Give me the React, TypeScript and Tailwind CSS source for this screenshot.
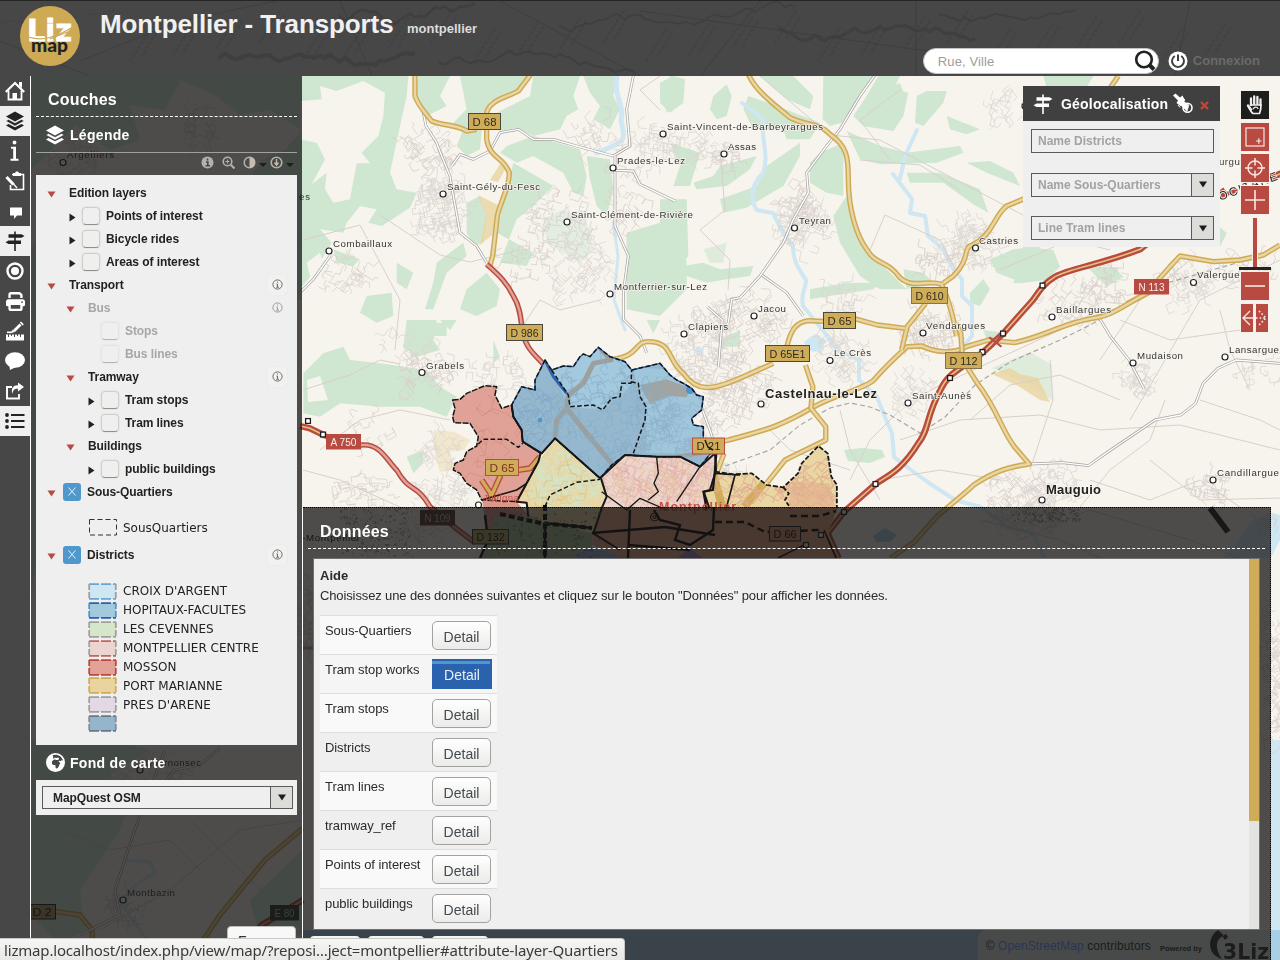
import React from "react";
import { FaPrint, FaEarthAfrica } from "react-icons/fa6";

/* ---------- map drawing ---------- */

type Kind = "local" | "main" | "motorway" | "national";

const casing: Record<Kind, [string, number, string, number]> = {
  local: ["#a5a3a0", 2.8, "#ffffff", 1.4],
  main: ["#cfaa55", 5.4, "#e9d6a2", 2.4],
  motorway: ["#b94a42", 6.4, "#e3c27a", 1.6],
  national: ["#b94a42", 5.4, "#e2a397", 2.4],
};

function Road({ d, kind }: { d: string; kind: Kind }) {
  const [c1, w1, c2, w2] = casing[kind];
  return (
    <g fill="none" strokeLinejoin="round">
      <path d={d} stroke={c1} strokeWidth={w1} vectorEffect="non-scaling-stroke" />
      <path d={d} stroke={c2} strokeWidth={w2} vectorEffect="non-scaling-stroke" />
    </g>
  );
}

function streets(cx: number, cy: number, rx: number, ry: number, n: number, seed: number, cell = 7) {
  let s = seed * 7919 + 17;
  const rnd = () => {
    s = (s * 1103515245 + 12345) % 2147483648;
    return s / 2147483648;
  };
  const tilt = rnd() * 1.5;
  let d = "";
  for (let i = 0; i < n; i++) {
    const a = rnd() * Math.PI * 2;
    const r = Math.sqrt(rnd());
    let x = cx + Math.cos(a) * r * rx;
    let y = cy + Math.sin(a) * r * ry;
    d += `M${x.toFixed(1)},${y.toFixed(1)}`;
    let dir = tilt + Math.floor(rnd() * 4) * (Math.PI / 2);
    for (let k = 0; k < 3; k++) {
      const len = cell * (0.4 + rnd());
      x += Math.cos(dir) * len;
      y += Math.sin(dir) * len;
      d += `L${x.toFixed(1)},${y.toFixed(1)}`;
      dir += (rnd() > 0.5 ? 1 : -1) * (Math.PI / 2) * (0.7 + rnd() * 0.4);
    }
  }
  return d;
}

const towns: [number, number, number, number, number][] = [
  [428, 152, 24, 20, 50], [440, 205, 26, 34, 110], [560, 225, 34, 30, 60], [580, 270, 34, 34, 70],
  [585, 130, 24, 16, 20], [650, 145, 34, 20, 45], [625, 200, 20, 36, 30], [700, 145, 30, 14, 28],
  [728, 156, 14, 8, 20], [803, 222, 28, 30, 90], [800, 205, 18, 18, 30], [970, 245, 26, 26, 90],
  [935, 265, 16, 12, 24], [1015, 110, 30, 16, 30], [740, 320, 44, 24, 100], [700, 350, 34, 34, 90],
  [735, 385, 40, 36, 120], [840, 355, 24, 26, 60], [930, 330, 26, 20, 70], [840, 300, 16, 14, 24],
  [1075, 300, 34, 20, 50], [1185, 285, 26, 22, 60], [1110, 285, 16, 20, 24], [1135, 380, 18, 18, 40],
  [1020, 500, 34, 26, 90], [1055, 485, 22, 20, 40], [1210, 490, 18, 16, 30], [915, 395, 24, 18, 40],
  [425, 375, 30, 20, 50], [500, 380, 30, 20, 40], [345, 275, 20, 22, 30], [440, 450, 20, 20, 30],
  [360, 495, 30, 15, 30], [450, 490, 26, 15, 44], [705, 440, 18, 30, 40], [730, 475, 16, 12, 30],
  [520, 260, 24, 16, 20], [400, 345, 30, 18, 16], [370, 430, 24, 20, 14], [1260, 370, 24, 16, 16],
  [1245, 270, 34, 20, 30], [390, 530, 50, 22, 60], [310, 620, 12, 40, 40], [150, 770, 40, 20, 50],
  [200, 130, 14, 24, 30], [75, 160, 26, 22, 40], [130, 910, 20, 20, 30], [1030, 520, 30, 14, 50],
  [1277, 690, 8, 60, 60], [1265, 640, 20, 40, 40], [1270, 520, 10, 8, 8],
];

const paths = [
  "M303,240 L360,225 L400,300 L395,350", "M380,215 L440,255 L470,262 L520,250", "M520,330 L540,300 L560,310 L600,300",
  "M303,390 L350,375 L380,360 L400,364", "M660,110 L640,90 L660,76", "M720,150 L725,210 L700,230 L730,260 L728,290",
  "M760,76 L800,110 L830,135 L880,140 L1023,215", "M860,160 L920,165 L960,190", "M870,250 L885,215 L940,240 L955,268",
  "M890,160 L860,120 L900,90", "M1000,270 L1070,240 L1110,250", "M1130,420 L1200,300 L1280,260", "M970,420 L1010,385 L1060,375 L1120,400",
  "M900,440 L960,420 L1040,415 L1100,430 L1180,425 L1280,450", "M880,480 L940,470 L1000,480", "M1100,360 L1140,300 L1190,260",
  "M1150,460 L1200,500 L1280,498", "M1080,507 L1110,470 L1150,440 L1165,400", "M930,390 L1060,330 L1100,310", "M1050,360 L1053,400 L1030,470",
  "M1200,400 L1260,420 L1280,430", "M1090,480 L1150,500 L1200,480 L1240,507", "M840,410 L850,450 L880,500", "M770,430 L790,450 L850,470",
  "M900,410 L870,440 L850,480", "M1220,310 L1230,350 L1250,390", "M1120,320 L1170,340 L1240,330", "M303,470 L340,480 L400,507",
  "M320,450 L360,420 L400,410 L450,420", "M980,520 L1060,540 L1100,558", "M1020,540 L1090,510 L1190,540 L1240,558",
  "M60,830 L110,850 L170,840 L200,870", "M100,930 L170,890 L240,830 L303,820", "M190,820 L240,870 L303,930",
];

const places: [string, number, number, number, number, number][] = [
  ["Saint-Vincent-de-Barbeyrargues", 667, 129.5, 156, 663, 134], ["Assas", 728, 149.5, 28, 724, 154],
  ["Prades-le-Lez", 617, 163.5, 68, 613, 168], ["Saint-Gély-du-Fesc", 447, 189.5, 93, 443, 194],
  ["Saint-Clément-de-Rivière", 571, 218, 122, 567, 222], ["Combaillaux", 333, 247, 59, 329, 251],
  ["Montferrier-sur-Lez", 614, 290, 93, 610, 294], ["Teyran", 799, 223.5, 32, 794.5, 228],
  ["Castries", 979, 244, 39, 975.5, 248], ["Jacou", 758, 311.5, 28, 754, 316], ["Clapiers", 688, 329.5, 40, 684, 334],
  ["Le Crès", 834, 356, 37, 830, 360.5], ["Vendargues", 926, 329, 59, 923, 333], ["Baillargues", 1056, 312.5, 55, 1052, 317],
  ["Mudaison", 1137, 359, 46, 1133, 363], ["Lansargue", 1229, 353, 50, 1225, 357], ["Valergues", 1197, 278, 48, 1193.5, 282.5],
  ["Saint-Aunès", 912, 399, 59, 908, 403], ["Candillargue", 1217, 475.5, 62, 1213, 480], ["Grabels", 426, 368.5, 38, 422, 372.5],
  ["Argelliers", 67, 158, 47, 63, 162.5], ["Montbazin", 127, 895.5, 48, 123, 900], ["Cournonsec", 145, 766, 56, 140, 770],
  ["Sussargues", 1029, 102, 56, 1025, 106],
];

type Badge = [string, number, number, number, string, string, string];
const GOLD = "#cfac58";
const badges: Badge[] = [
  ["D 68", 468, 113, 33, GOLD, "#4a463c", "#2b2a26"], ["D 986", 506, 324, 37, GOLD, "#4a463c", "#2b2a26"],
  ["D 610", 911, 287, 37, GOLD, "#8d7248", "#2b2a26"], ["D 65", 823, 312, 33, GOLD, "#4a463c", "#2b2a26"],
  ["D 65E1", 765, 345, 45, GOLD, "#4a463c", "#2b2a26"], ["D 112", 945, 352, 37, GOLD, "#8d7248", "#2b2a26"],
  ["D 21", 692, 437.5, 33, GOLD, "#b94a42", "#2b2a26"], ["D 65", 485, 459, 34, GOLD, "#b94a42", "#7d2f22"],
  ["A 750", 326, 434, 35, "#b94a42", "#b94a42", "#f6efe9"], ["N 113", 1134, 279, 35, "#b94a42", "#b94a42", "#f6efe9"],
  ["N 109", 420, 510, 35, "#5a3833", "#5a3833", "#c9b5a6"], ["D 132", 472, 529, 37, "#b0a060", "#333333", "#111111"],
  ["D 66", 769, 526, 32, "#d58f74", "#222222", "#111111"], ["D 2", 28, 904, 28, "#b09860", "#222222", "#111111"],
  ["E 80", 270, 905, 29, "#2c3a30", "#2c3a30", "#9fc4b0"],
];

const nodes: [number, number][] = [
  [1042.5, 285.5], [1003, 333.5], [982.5, 352], [950, 378], [875.5, 484], [844, 512], [821, 535], [308, 421], [323, 434.5], [806, 545],
];

function Dots({ n, seed, x, y, w, h, fill }: { n: number; seed: number; x: number; y: number; w: number; h: number; fill: string }) {
  let s = seed;
  const rnd = () => {
    s = (s * 1103515245 + 12345) % 2147483648;
    return s / 2147483648;
  };
  let d = "";
  for (let i = 0; i < n; i++) d += `M${Math.round(x + rnd() * w)},${Math.round(y + rnd() * h)}h${1 + Math.round(rnd() * 2)}`;
  return <path d={d} stroke={fill} strokeWidth="1" fill="none" />;
}

const mossonPath =
  "M458,240 L480,238 L500,220 L555,197 L590,200 L585,225 L605,265 L635,255 L640,290 L665,330 L668,365 L722,400 L715,425 L680,490 L650,545 L545,540 L530,510 L500,490 L480,460 L460,450 L465,430 L490,420 L500,395 L530,378 L535,350 L510,310 L462,308 L458,290 L465,265Z";
const hospitalPath =
  "M735,120 L755,150 L790,138 L820,140 L840,110 L850,102 L870,110 L895,82 L930,110 L975,125 L995,150 L1080,130 L1110,165 L1130,180 L1150,190 L1175,205 L1190,225 L1210,230 L1205,270 L1175,295 L1180,315 L1210,320 L1210,360 L1232,400 L1200,440 L1140,410 L1070,410 L975,405 L935,435 L900,475 L765,355 L725,400 L668,365 L665,330 L640,290 L635,255 L665,200 L705,210 L705,180Z";
const cevennesPath =
  "M765,355 L900,475 L910,500 L920,530 L905,565 L880,640 L730,610 L685,590 L680,548 L650,545 L680,490 L715,425Z";
const centrePath =
  "M903,475 L975,405 L1070,412 L1140,410 L1200,440 L1245,400 L1248,450 L1230,510 L1210,515 L1220,570 L905,570 L920,530Z";
const portPath =
  "M40,515 L90,523 L140,520 L180,555 L225,562 L265,520 L275,490 L320,438 L345,460 L355,530 L370,555 L370,640 L20,640 L10,575 L35,570Z";

function MapDrawing() {
  return (
    <svg className="absolute inset-0" width="1280" height="960" viewBox="0 0 1280 960" fontFamily="'Liberation Sans', Arial, sans-serif">
      <defs>
        <clipPath id="hosp"><path d={hospitalPath} /></clipPath>
        <clipPath id="ceven"><path d={cevennesPath} /></clipPath>
        <clipPath id="centre"><path d={centrePath} /></clipPath>
        <clipPath id="port"><path d={portPath} /></clipPath>
        <clipPath id="mosson"><path d={mossonPath} /></clipPath>
      </defs>
      <rect width="1280" height="960" fill="#f7f4ee" />

      {/* woods */}
      <g fill="#cfe6d1">
        <g transform="translate(300 76) scale(.33333)">
          <path d="M0,0 L325,0 L320,60 L300,150 L270,290 L290,340 L350,350 L330,395 L245,450 L205,440 L230,400 L180,390 L140,440 L130,470 L60,460 L95,500 L40,590 L0,640Z" />
          <path d="M355,0 L450,0 L420,60 L440,90 L380,120 L350,70Z" />
          <path d="M480,0 L690,0 L660,40 L570,75 L550,110 L540,220 L500,240 L470,210 L490,160 L460,140 L500,100Z" />
          <path d="M700,0 L840,0 L820,60 L835,100 L800,120 L780,160 L700,180 L650,155 L600,165 L590,110 L690,60Z" />
          <path d="M620,210 L700,180 L840,220 L860,300 L850,360 L820,350 L790,290 L700,240 L650,260 L600,230Z" />
          <path d="M850,0 L950,0 L940,60 L960,100 L930,160 L880,130 L900,90 L870,50Z" />
          <path d="M860,240 L930,250 L940,340 L920,420 L890,390 L870,310Z" />
          <path d="M1110,0 L1150,10 L1140,80 L1100,110 L1090,60Z" />
          <path d="M640,260 L760,330 L700,390 L650,430 L600,560 L680,570 L700,530 L590,470 L610,380Z" />
          <path d="M500,380 L540,360 L560,420 L550,500 L520,510 L500,470Z" />
          <path d="M490,500 L500,540 L440,590 L400,700 L375,700 L400,620 L410,560Z" />
          <path d="M560,590 L600,640 L590,690 L530,720 L480,700 L500,640Z" />
          <path d="M200,660 L275,650 L280,720 L230,740 L180,710Z" />
          <path d="M100,520 L180,550 L160,570 L110,560Z" />
          <path d="M340,740 L440,740 L440,780 L330,780Z" />
          <path d="M980,470 L1080,440 L1140,450 L1160,560 L1160,640 L1080,720 L980,700Z" />
          <path d="M1110,200 L1200,230 L1170,330 L1120,330 L1140,270Z" />
          <path d="M290,560 L340,590 L320,640 L290,620Z" />
          <path d="M730,430 L790,400 L860,440 L880,520 L840,560 L740,500Z" opacity=".5" />
        </g>
        <g transform="translate(660 76) scale(.33333)">
          <path d="M0,20 L40,0 L75,10 L70,80 L30,110 L0,80Z" />
          <path d="M160,60 L200,25 L215,60 L200,120 L170,130 L150,100Z" />
          <path d="M490,0 L640,0 L600,60 L545,140 L510,150 L488,130Z" />
          <path d="M265,60 L350,90 L480,140 L450,190 L380,190 L370,160 L280,160 L250,100Z" />
          <path d="M300,0 L400,0 L460,60 L450,100 L380,70Z" />
          <path d="M655,0 L720,0 L700,40 L745,50 L730,120 L700,165 L610,150 L580,120 L620,60Z" />
          <path d="M560,165 L660,210 L740,230 L900,210 L910,230 L830,260 L660,265 L600,250Z" />
          <path d="M770,60 L800,45 L860,45 L850,80 L790,150 L765,140Z" />
          <path d="M860,120 L960,160 L920,175 L870,160Z" />
          <path d="M740,290 L840,290 L960,340 L985,410 L940,385 L850,320 L750,320Z" />
          <path d="M920,260 L990,255 L1060,290 L1080,330 L980,290Z" />
          <path d="M180,370 L290,330 L320,270 L420,200 L420,240 L370,330 L260,395 L190,410Z" />
          <path d="M100,320 L160,300 L180,270 L290,240 L270,280 L200,330 L110,340Z" />
          <path d="M450,260 L480,230 L550,200 L550,360 L500,350 L450,320Z" />
          <path d="M520,420 L560,360 L600,500 L700,600 L740,640 L660,640 L600,600 L540,500Z" />
          <path d="M0,370 L80,370 L85,540 L40,600 L0,640Z" />
          <path d="M70,570 L130,560 L180,580 L280,570 L270,600 L200,610 L140,620 L80,600Z" />
          <path d="M450,640 L560,620 L660,620 L640,640 L540,655 L450,670Z" />
          <path d="M730,580 L790,590 L820,620 L740,640Z" />
          <path d="M930,650 L970,610 L990,640 L960,690 L930,680Z" />
          <path d="M990,550 L1060,520 L1140,510 L1140,600 L1060,610 L1010,590Z" />
          <path d="M130,520 L200,500 L190,560 L150,560Z" opacity=".6" />
        </g>
        <g transform="translate(880 0) scale(.33333)">
          <path d="M0,270 L60,250 L80,300 L30,330 L0,320Z" />
          <path d="M490,228 L640,228 L620,262 L500,262Z" />
          <path d="M400,850 L430,740 L520,750 L540,800 L500,840 L420,850Z" />
          <path d="M620,800 L700,800 L730,830 L680,860Z" />
          <path d="M950,740 L1020,680 L1040,700 L1020,740Z" />
          <path d="M310,990 L380,1000 L350,1030 L320,1020Z" />
        </g>
        <g transform="translate(300 320) scale(.33333)">
          <path d="M10,160 L70,100 L130,80 L150,120 L240,130 L380,150 L420,200 L470,230 L440,290 L360,260 L240,260 L120,250 L60,290 L10,280Z" />
          <path d="M320,0 L410,0 L400,60 L420,90 L350,110 L310,80Z" />
          <path d="M320,410 L370,390 L370,430 L340,460Z" />
          <path d="M1040,0 L1080,0 L1060,40Z M1260,60 L1320,30 L1320,80 L1270,80Z" />
          <path d="M420,0 L470,0 L450,30Z" />
          <path d="M580,60 L600,110 L580,130Z" />
        </g>
        <path d="M844,450 L862,448 L882,450 L885,457 L870,463 L848,461Z" />
        <path d="M992,368 L1030,352 L1052,365 L1052,400 L1030,385Z" opacity=".6" />
        {/* west side */}
        <path d="M31,76 H302 V190 H240 L262,160 L285,150 L302,130 L270,110 L240,115 L215,95 L180,80 L165,110 L130,105 L140,140 L110,150 L75,125 L31,170Z" />
        <path d="M31,250 L36,240 V560 L31,600Z M297,175 H302 V300 H297Z M31,740 H110 L150,750 L110,775 L125,815 L120,830 L80,890 L85,930 L60,945 L31,915Z M250,900 L302,850 V935 L260,940Z" />
      </g>
      <path d="M155,110 L200,105 L210,150 L170,160Z" fill="#f7f4ee" opacity=".5" />
      <g fill="#f7f4ee" transform="translate(300 76) scale(.33333)">
        <path d="M60,30 L110,45 L190,15 L255,50 L250,120 L235,180 L185,230 L210,262 L170,262 L150,370 L100,380 L75,340 L80,290 L35,325 L75,250 L50,200 L0,190 L0,75 L65,70Z" />
        <path d="M20,560 L60,530 L80,600 L40,640Z" />
      </g>
      <path d="M307,380 L320,376 L328,400 L308,402Z" fill="#f7f4ee" />

      {/* ochre heath */}
      <g fill="#e9d6a2" opacity=".85">
        <path d="M500,164 L506,168 L498,182 L490,180Z M478,195 L500,206 L492,235 L480,245 L486,215Z" />
        <path d="M434,430 L455,432 L470,440 L464,450 L450,452 L455,470 L440,472 L435,455Z" opacity=".5" />
        <path d="M992,374 L1010,368 L1020,374 L1038,378 L1050,402 L1040,400 L1018,386Z" />
      </g>

      {/* water */}
      <g fill="none" stroke="#cfe6f3" strokeWidth="4" strokeLinejoin="round" strokeLinecap="round">
        <path d="M617,76 C613,96 625,106 621,120 C624,136 627,139 613,146 L597,153" strokeWidth="5" />
        <path d="M613,222 L618,256 L614,300 L625,330" strokeWidth="3" />
        <path d="M742,103 L763,119 C760,136 770,156 763,173 C750,186 750,200 757,210 L773,213 L783,233 L793,246 C793,263 800,270 806,280 C806,290 800,293 803,306 L825,333 L837,350 L859,360 L859,380 L877,397 L885,417 L892,433 L894,457 L911,470 L929,483 L955,500 L981,507 L1007,527 L1033,533 L1044,557" />
        <path d="M917,130 L905,156 L900,179 M893,174 L912,199 L910,213 L925,216 L928,236 L943,249 L953,269 L962,279 L962,296 L972,306 L972,336 L960,350" />
        <path d="M126,860 L150,862 L155,872 L128,890 L125,910 L140,930 L150,945" strokeWidth="3" />
      </g>
      <g fill="#cfe6f3">
        <path d="M804,342 L815,334 L826,340 L820,352 L808,351Z" />
        <path d="M873,536 L885,528 L897,535 L890,542 L876,542Z" fill="#a9cfe6" />
        <path d="M1235,545 L1250,522 L1270,512 L1280,515 V540 L1271,558 L1220,560Z M1271,740 H1280 V960 H1271Z" />
        <path d="M303,930 H1280 V960 H303Z" fill="#a9cfe6" />
        <circle cx="699" cy="351" r="4" />
      </g>

      {/* street texture */}
      {towns.map(([x, y, rx, ry, n], i) => (
        <path key={i} d={streets(x, y, rx, ry, n, i + 3)} fill="none" stroke={i % 2 ? "#dcd6d1" : "#d9cfca"} strokeWidth=".8" />
      ))}
      {paths.map((d, i) => (
        <path key={i} d={d} fill="none" stroke="#d6d0ca" strokeWidth="1" />
      ))}
      <path d="M725,466 L770,450 L800,425 L830,408 L850,403 L870,407 L890,415 L920,433 L945,417 L975,385 L1010,362 L1060,340 L1090,325 L1160,285 L1240,262" fill="none" stroke="#a9a7a4" strokeWidth="1.2" strokeDasharray="5 3" />

      {/* roads */}
      <g transform="translate(300 76) scale(.33333)">
        <Road kind="local" d="M370,110 L378,150 L410,200 L425,240 L450,300 L460,360 L480,470 L530,510 L560,560" />
        <Road kind="local" d="M455,270 L480,235 L520,250 L570,225 L600,170 L655,160 L700,190 L760,190 L830,210 L940,240 L990,210 L980,100 L1000,0" />
        <Road kind="local" d="M945,240 L945,450 L985,540 L970,650 L970,730 L1020,780 L1040,830" />
        <Road kind="local" d="M945,283 L1000,285 L1020,325 L1125,375" />
        <Road kind="local" d="M90,540 L40,610 L0,650" />
        <Road kind="main" d="M345,-5 L345,60 C355,90 375,110 395,135 C430,150 470,145 500,165 L530,160" />
        <Road kind="main" d="M692,-4 L655,45 C620,65 570,70 560,110 L560,190 C570,250 610,240 628,290 C630,330 600,380 592,420 L578,540 L568,575" />
        <Road kind="national" d="M560,565 C600,600 620,620 640,660 C665,700 662,740 668,770 C680,820 700,830 735,870" />
      </g>
      <g transform="translate(660 76) scale(.33333)">
        <Road kind="local" d="M650,-10 L600,60 L540,160 L500,210 L440,290 L445,350 L400,430 L370,500 L300,600 L240,665 L215,670 L205,740" />
        <Road kind="local" d="M305,597 L380,650 L430,720" />
        <Road kind="main" d="M265,-5 C290,50 350,90 390,125 C440,150 480,140 510,175 C560,210 565,240 565,310 C565,400 590,480 620,520 C650,570 680,550 720,605 C760,640 800,610 845,625 L880,600 C930,550 910,520 930,510 C1000,480 1000,420 1040,390 L1100,365" />
        <Road kind="main" d="M845,625 C870,680 880,720 890,780" />
      </g>
      <g transform="translate(880 0) scale(.33333)">
        <Road kind="main" d="M715,228 L700,250 L660,310 L640,370" />
        <Road kind="main" d="M740,912 L800,880 L870,800 L900,768 L1000,785 L1080,780 L1150,765 L1200,735" />
      </g>
      <g transform="translate(700 300) scale(.3699 .33333)">
        <Road kind="local" d="M1080,55 L1110,110 L1160,180 L1200,265" />
        <Road kind="local" d="M890,492 L980,488 L1050,497 L1110,450 L1150,420 L1230,360 L1300,345 L1340,310 L1360,250 L1400,205 L1450,180 L1568,190" />
        <Road kind="local" d="M50,200 L60,60 L20,20" />
        <Road kind="local" d="M0,310 L30,400 L40,440" />
        <Road kind="main" d="M1250,-45 L1175,0 C1130,30 1100,50 1060,55 C980,70 930,110 850,128 L780,120 L720,140 C690,160 640,160 600,138 L560,140 C530,170 500,200 470,240 C440,270 370,280 300,325 C230,370 200,385 60,425" />
        <Road kind="main" d="M545,150 L560,80 L610,10" />
        <Road kind="main" d="M415,55 L480,75 L555,85" />
        <Road kind="main" d="M235,140 C245,90 260,65 295,62 L340,65" />
        <Road kind="main" d="M692,70 L705,100 L710,180 L750,250 C800,320 820,400 850,440 L890,492 C840,500 800,510 740,555 L720,575 L640,650 L580,725 L515,775" />
        <Road kind="main" d="M285,195 L305,260 L300,325 L340,380 L340,420 L230,480 L180,550" />
        <Road kind="main" d="M65,460 L45,520" />
        <Road kind="motorway" d="M1420,-330 C1280,-210 1230,-190 1190,-152 C1080,-105 1000,-95 960,-70 C925,-45 920,-30 900,0 L820,100 L765,157 C700,210 670,220 650,270 C610,350 620,390 590,430 C540,520 500,530 475,552 L390,635 L345,700 L375,775" />
        <path d="M782,112 L815,140 M790,140 L812,108" stroke="#b94a42" strokeWidth="6" />
      </g>
      <g transform="translate(300 320) scale(.33333)">
        <Road kind="motorway" d="M0,318 L30,325 L75,347" />
        <Road kind="national" d="M75,347 L130,375 L185,375 C240,370 260,420 290,450 C330,520 350,490 390,560 L440,600 C470,630 490,640 520,665" />
        <Road kind="main" d="M935,118 C1020,110 1000,65 1045,65 C1120,65 1100,120 1150,160 C1190,215 1230,215 1330,170 L1420,130" />
      </g>
      <path d="M1210,508 L1228,532" stroke="#222" strokeWidth="6" />
      <Road kind="motorway" d="M1268,179 L1282,173" />
      <path d="M303,648 H314" stroke="#b99" strokeWidth="3" />
      <g>
        <Road kind="main" d="M31,908 L80,915 L92,930 L94,960" />
        <Road kind="main" d="M190,960 L220,915 L265,860 L303,828" />
        <Road kind="motorway" d="M230,960 L262,925 L303,900" />
        <Road kind="local" d="M165,750 L140,815 L128,850 L115,890 L120,915 L80,935" />
        <Road kind="local" d="M220,748 L200,765 L175,770 L158,790" />
      </g>

      {/* districts */}
      <g transform="translate(300 320) scale(.33333)" strokeLinejoin="round">
        <path d={mossonPath} fill="#e0a296" />
        <path d={hospitalPath} fill="#95b8cf" />
        <path d={cevennesPath} fill="#e9d6a2" />
        <path d={centrePath} fill="#ecd5cf" />
        <g clipPath="url(#hosp)">
          <path d="M700,80 L1000,90 L995,190 L960,235 L908,270 L810,260 L735,120Z" fill="#a3c9df" />
          <path d="M1000,140 L1110,150 L1220,260 L1210,400 L1040,400 L1038,260 L1010,200Z" fill="#a0c6dc" />
          <path d="M1020,195 L1100,178 L1170,205 L1160,232 L1110,228 L1050,252Z" fill="#a2a4a2" />
          <path d="M940,118 L880,130 L850,190 L805,225 L800,265 L770,300 L765,350 M800,265 L860,340 L935,430" fill="none" stroke="#9c9f9c" strokeWidth="15" />
          <path d="M1130,410 L1200,400 L1230,380 M900,85 L930,120" fill="none" stroke="#9c9f9c" strokeWidth="12" />
          <path d={streets(690, 300, 60, 90, 50, 61, 26)} fill="none" stroke="#80a6c6" strokeWidth="2" />
          <path d={streets(920, 280, 200, 150, 150, 62, 26)} fill="none" stroke="#87adc5" strokeWidth="2" />
          <path d={streets(1120, 320, 90, 80, 60, 63, 26)} fill="none" stroke="#8fb4cb" strokeWidth="2" />
          <circle cx="720" cy="300" r="7" fill="#4f95c9" />
          <circle cx="1170" cy="210" r="12" fill="#4f95c9" />
          <path d="M735,120 L760,170 L800,220" stroke="#2f62ad" strokeWidth="9" fill="none" />
        </g>
        <g clipPath="url(#mosson)" fill="none">
          <path d={streets(590, 350, 110, 150, 26, 64, 30)} stroke="#d38a80" strokeWidth="2" />
          <path d="M545,480 L575,525 L600,470 L590,440 M570,520 L590,570 M655,450 L690,445 L720,410" stroke="#b94a42" strokeWidth="18" />
          <path d="M545,480 L575,525 L600,470 L590,440 M570,520 L590,570 M655,450 L690,445 L720,410" stroke="#cfac58" strokeWidth="10" />
        </g>
        <g clipPath="url(#ceven)" fill="none">
          <path d={streets(790, 490, 110, 90, 150, 65, 20)} stroke="#d6e2c4" strokeWidth="3.500" />
          <path d={streets(790, 490, 110, 90, 24, 66, 24)} stroke="#d9bd78" strokeWidth="1.500" />
        </g>
        <g clipPath="url(#centre)" fill="none">
          <path d={streets(1070, 490, 170, 80, 170, 67, 26)} stroke="#e3b0a6" strokeWidth="2.200" />
          <path d={streets(1070, 490, 170, 80, 50, 68, 26)} stroke="#e8d3a6" strokeWidth="2.400" />
        </g>
        <path d="M1243,460 L1320,465 L1420,600 L1215,600 L1210,515 L1232,510Z" fill="#dfc07a" />
      </g>
      <g transform="translate(700 300) scale(.3699 .33333)">
        <path d={portPath} fill="#e9d6a2" />
        <g clipPath="url(#port)" fill="none">
          <path d="M180,540 L120,620 M35,520 L60,620" stroke="#cfac58" strokeWidth="22" />
          <path d="M250,545 L350,550 L365,620 L240,620Z" fill="#e6bd93" />
          <path d={streets(220, 560, 180, 70, 110, 71, 26)} stroke="#e0ad90" strokeWidth="2.600" />
        </g>
      </g>
      <path d="M482,500 L517,502 L528,515 L495,520 L488,540Z" fill="#d9988a" />
      <path d="M495,518 L530,515 L545,523 L592,533 L593,545 L580,560 L480,560Z" fill="#a9bd95" />
      <path d="M603,507 L592,533 L593,545 L620,560 L836,560 L827,535 L838,507Z" fill="#e8a285" />
      <path d="M565,560 L593,547 L630,560Z" fill="#8ab0d8" />
      <path d="M675,560 L690,548 L705,560Z" fill="#a080c0" />

      <g transform="translate(300 320) scale(.33333)" fill="none" stroke="#161616" strokeWidth="4.500" strokeLinejoin="round">
        <path d={mossonPath} strokeDasharray="18 4" />
        <path d={hospitalPath} stroke="#2858a0" strokeWidth="4" />
        <path d={hospitalPath} strokeDasharray="14 7" />
        <path d="M668,365 L725,400 L765,355 L900,475 L975,405 L1070,410 L1140,410 L1200,440 L1245,400 L1248,450 L1230,510 L1210,515 L1220,570" strokeWidth="6" />
        <path d="M722,400 L715,425 L680,490 L650,545 L680,548 L685,590 M635,255 L640,290 L665,330 L668,365" strokeWidth="6" />
        <path d="M903,475 L920,530 L905,565 L880,640 L960,690" strokeWidth="6" />
        <path d="M755,150 L805,225 L810,260 L880,255 L908,270 L935,235 L960,230 L965,190 L993,190 L995,150 M993,185 L1015,190 L1020,230 L1038,260 L1035,300 L1000,400" strokeDasharray="14 7" />
        <path d="M535,372 L550,358 L620,358 L655,382 L668,370" strokeDasharray="14 7" />
        <path d="M735,560 L750,525 L830,487 L900,478" strokeDasharray="14 7" />
        <path d="M1070,412 L1075,460 L1062,490 L1075,515 L1045,540 M1200,440 L1130,545 M905,515 L980,570 L1020,535 L1100,570" strokeWidth="4" />
        <path d="M680,490 L650,510 L545,540 M1243,460 L1320,465 M1305,465 L1280,560" strokeWidth="5" />
      </g>
      <g transform="translate(700 300) scale(.3699 .33333)" fill="none" stroke="#161616" strokeWidth="5">
        <path d="M40,515 L90,523 L140,520 L180,555 L225,562 L265,520 L275,490 L320,438 L345,460 L355,530 L370,555 L370,625" strokeDasharray="14 5" />
        <path d="M225,562 L240,580 L230,600 L245,625" strokeDasharray="12 6" />
        <path d="M45,450 L40,515 L35,570 L10,575 L25,625" strokeWidth="6" />
      </g>
      <g fill="none" stroke="#0c0c0c" strokeWidth="2.4">
        <path d="M480,558 L488,540 L485,515 M545,523 L592,528 M545,523 V558 M630,510 L628,558 M592,533 L665,527 L715,535 M654,510 L660,520 L680,525 L675,540 L690,545 L713,530 L714,507 M628,545 L690,550" />
        <path d="M545,505 V558" strokeDasharray="6 3" strokeWidth="4" />
        <path d="M500,514 L540,523 L592,528" strokeDasharray="6 3" strokeWidth="4" />
        <path d="M715,522 L745,522 L765,532 L820,530 M790,516 H820 L836,511" strokeDasharray="7 4" />
        <path d="M778,558 L808,543 M824,530 L836,558" strokeWidth="1.500" />
        <circle cx="654.500" cy="517" r="4" strokeWidth="1" />
        <circle cx="654.500" cy="517" r="1.500" strokeWidth="1" />
      </g>
      <Dots n={170} seed={5} x={340} y={508} w={70} h={48} fill="#8c8880" />
      <Dots n={110} seed={9} x={1012} y={508} w={66} h={14} fill="#8c8880" />
      <Dots n={100} seed={21} x={490} y={512} w={110} h={45} fill="#5c6a48" />

      {/* place markers and names */}
      {nodes.map(([x, y], i) => (
        <rect key={i} x={x - 2.4} y={y - 2.4} width="4.800" height="4.800" fill="#fff" stroke="#1d1d1b" strokeWidth="1.300" />
      ))}
      {places.map(([t, x, y, w, mx, my]) => (
        <g key={t}>
          <circle cx={mx} cy={my} r="3" fill="#fff" stroke="#222" strokeWidth="1.200" />
          <text x={x} y={y} textLength={w} fontSize="9.700" fill="#333331" stroke="#f7f4ee" strokeWidth="1.400" paintOrder="stroke">{t}</text>
        </g>
      ))}
      <circle cx="761" cy="404" r="3" fill="#fff" stroke="#222" strokeWidth="1.200" />
      <circle cx="1042" cy="500" r="3" fill="#fff" stroke="#222" strokeWidth="1.200" />
      <circle cx="478.500" cy="505" r="3" fill="#fff" stroke="#222" strokeWidth="1.200" />
      <g fontWeight="bold" fontSize="13" fill="#222220" stroke="#f7f4ee" strokeWidth="1.400" paintOrder="stroke">
        <text x="765" y="398" textLength="112">Castelnau-le-Lez</text>
        <text x="1046" y="494" textLength="55">Mauguio</text>
      </g>
      <text x="659" y="511" textLength="77" fontSize="12.500" fontWeight="bold" fill="#c0524a">Montpellier</text>
      <text x="483" y="501" textLength="36" fontSize="9.700" fill="#c0524a">Juvigna</text>
      <text x="302" y="541" textLength="58" fontSize="9.700" fill="#111">-Montpellier</text>
      <text x="299" y="200" textLength="11" fontSize="9.700" fill="#3d3d3b">es</text>
      <text x="1219" y="165" textLength="32" fontSize="9.700" fill="#3d3d3b">urgues</text>
      <g transform="rotate(-20 1222 200)" fontSize="12" fill="#2a2a28">
        <path d="M1214,196 H1240" stroke="#b94a42" strokeWidth="4" />
        <text x="1220" y="200" textLength="62" stroke="#f7f4ee" strokeWidth="1.600" paintOrder="stroke">OCITANE</text>
      </g>
      {badges.map(([t, x, y, w, bg, line, fg], i) => (
        <g key={i}>
          <rect x={x + 0.5} y={y + 0.5} width={w - 1} height={bg === GOLD ? 16 : 14.5} fill={bg} stroke={line} />
          <text x={x + w / 2} y={y + (bg === GOLD ? 12.8 : 11.8)} textAnchor="middle" fontSize="11.500" textLength={w - 9} lengthAdjust="spacingAndGlyphs" fill={fg}>{t}</text>
        </g>
      ))}
      <path d="M705,440 L708,447 L713,450" stroke="#1d1d1b" fill="none" strokeWidth="1.500" />
    </svg>
  );
}

/* ---------- icons ---------- */

function Layers({ fg, gap }: { fg: string; gap: string }) {
  return (
    <svg width="20" height="20" viewBox="0 0 20 20" className="block shrink-0">
      <path d="M1,14.500 L10,19.500 L19,14.500 L16.500,13 L10,16.300 L3.500,13Z" fill={fg} />
      <path d="M1,10 L10,15 L19,10 L16.500,8.500 L10,12 L3.500,8.500Z" fill={fg} stroke={gap} strokeWidth=".5" />
      <path d="M10,0.500 L19,5.500 L10,10.500 L1,5.500Z" fill={fg} />
    </svg>
  );
}

function Signpost({ fg }: { fg: string }) {
  return (
    <svg width="20" height="20" viewBox="0 0 20 20" className="block shrink-0" fill={fg}>
      <path d="M9.200,0.500 H10.800 V20 H9.200Z M3.500,3.200 H16.500 L19.500,5 L16.500,6.800 H3.500Z M0.500,11.200 L3.500,9.500 H16 V13 H3.500Z" />
    </svg>
  );
}

const navIcons: React.ReactNode[] = [
  <svg width="20" height="20" viewBox="0 0 20 20" fill="none" stroke="#fff" strokeWidth="2.200">
    <path d="M0.800,11 L10,2 L19.200,11" /><path d="M3.500,9.500 V18.500 H16.500 V9.500" strokeWidth="1.800" />
    <path d="M14,1 H17 V7 L14,4.500Z M7.500,12 H12 V19 H7.500Z" fill="#fff" stroke="none" />
  </svg>,
  <Layers fg="#222220" gap="#efefef" />,
  <svg width="20" height="22" viewBox="0 0 20 22" fill="#fff"><circle cx="9.500" cy="2.500" r="1.900" /><path d="M6,6.800 H11 V18.800 H13.500 V20.800 H5.500 V18.800 H8.200 V8.800 H6Z" /></svg>,
  <svg width="20" height="20" viewBox="0 0 20 20" fill="none" stroke="#fff" strokeWidth="1.600">
    <path d="M7,3.500 H18.500 V18.500 H5.500 V14" /><path d="M8,2 H10 L11,.5 H13 L14,2 H16 V5 H8Z" fill="#fff" stroke="none" />
    <path d="M1.500,6 L8.500,13.500" strokeWidth="3" /><path d="M8.500,13 L12,17" strokeWidth="1.400" />
  </svg>,
  <svg width="20" height="20" viewBox="0 0 20 20" fill="#fff"><path d="M5,6.500 H17 V14.500 H12 L9,18 V14.500 H5Z" /></svg>,
  <Signpost fg="#222220" />,
  <svg width="20" height="20" viewBox="0 0 20 20" fill="none" stroke="#fff"><circle cx="10" cy="10" r="7.500" strokeWidth="2.400" /><circle cx="10" cy="10" r="4" fill="#fff" stroke="none" /></svg>,
  <FaPrint size={19} color="#fff" />,
  <svg width="20" height="22" viewBox="0 0 20 22" fill="#fff">
    <path d="M1,14.500 H19 V20.500 H1Z" /><path d="M3.500,14 V17 M6.500,14 V16 M9.500,14 V17 M12.500,14 V16 M15.500,14 V17" stroke="#474747" />
    <path d="M2,12.300 H7" stroke="#fff" strokeWidth="1.600" /><path d="M9,11 L15.500,4.500" stroke="#fff" strokeWidth="2.800" fill="none" /><path d="M16,1.500 L18.800,4.300 L17.600,5.400 L14.800,2.600Z" /><path d="M6,13 L7.500,9.500 L10,12Z" />
  </svg>,
  <svg width="22" height="20" viewBox="0 0 22 20" fill="#fff"><ellipse cx="11" cy="9" rx="10" ry="7.800" /><path d="M5,13 L6,19 L13,15.500Z" /></svg>,
  <svg width="20" height="20" viewBox="0 0 20 20" fill="none" stroke="#fff" strokeWidth="1.900">
    <path d="M7,6 H2 V17.500 H14 V13" /><path d="M13,1.500 L19,6 L13,10.500 V7.800 C9.500,7.500 8,9 7.500,13 C5.500,7 8.500,4 13,4.200Z" fill="#fff" stroke="none" />
  </svg>,
  <svg width="20" height="20" viewBox="0 0 20 20" fill="#222220">
    <circle cx="2" cy="4" r="1.900" /><circle cx="2" cy="10" r="1.900" /><circle cx="2" cy="16" r="1.900" />
    <path d="M6,3 H19.500 V5 H6Z M6,9 H19.500 V11 H6Z M6,15 H19.500 V17 H6Z" />
  </svg>,
];
const activeNav = [1, 5, 11];

function Caret({ open }: { open: boolean }) {
  return open ? (
    <svg width="9" height="7" viewBox="0 0 9 7" className="block shrink-0"><path d="M0.500,0.500 H8.500 L4.500,6.500Z" fill="#b94a42" /></svg>
  ) : (
    <svg width="7" height="9" viewBox="0 0 7 9" className="block shrink-0"><path d="M0.500,0.500 L6.500,4.500 L0.500,8.500Z" fill="#222220" /></svg>
  );
}

function InfoDot({ framed }: { framed: boolean }) {
  return (
    <span className={framed ? "flex size-5 items-center justify-center rounded bg-[#f1f1f0] shadow-[0_0_1px_#d8d8d4]" : "flex size-5 items-center justify-center"}>
      <svg width="11" height="11" viewBox="0 0 11 11" fill="none" stroke={framed ? "#6d6d6b" : "#9b9b98"}>
        <circle cx="5.500" cy="5.500" r="4.600" /><path d="M5.500,2.500 V3.600 M4.500,5 H5.500 V8 M4.200,8.200 H7" />
      </svg>
    </span>
  );
}

/* ---------- layer tree ---------- */

type Row = { label: string; caret?: "open" | "closed"; box?: "empty" | "on"; faded?: boolean; info?: "framed" | "plain"; pad: string };

const rows: Row[] = [
  { label: "Edition layers", caret: "open", pad: "pl-[11px]" },
  { label: "Points of interest", caret: "closed", box: "empty", pad: "pl-[33px]" },
  { label: "Bicycle rides", caret: "closed", box: "empty", pad: "pl-[33px]" },
  { label: "Areas of interest", caret: "closed", box: "empty", pad: "pl-[33px]" },
  { label: "Transport", caret: "open", info: "framed", pad: "pl-[11px]" },
  { label: "Bus", caret: "open", faded: true, info: "plain", pad: "pl-[30px]" },
  { label: "Stops", box: "empty", faded: true, pad: "pl-[65px]" },
  { label: "Bus lines", box: "empty", faded: true, pad: "pl-[65px]" },
  { label: "Tramway", caret: "open", info: "framed", pad: "pl-[30px]" },
  { label: "Tram stops", caret: "closed", box: "empty", pad: "pl-[52px]" },
  { label: "Tram lines", caret: "closed", box: "empty", pad: "pl-[52px]" },
  { label: "Buildings", caret: "open", pad: "pl-[30px]" },
  { label: "public buildings", caret: "closed", box: "empty", pad: "pl-[52px]" },
  { label: "Sous-Quartiers", caret: "open", box: "on", pad: "pl-[11px]" },
];

function TreeRow({ label, caret, box, faded, info, pad }: Row) {
  return (
    <div className={`flex h-[23px] items-center pr-[10px] ${pad}`}>
      {caret && <span className="pt-[3px]"><Caret open={caret === "open"} /></span>}
      {box === "empty" && (
        <span className={`size-[18px] rounded-[4px] border border-b-[#8f8f8c] shadow-[0_0_1px_1px_#e6e6e2] ${caret ? "ml-[6px]" : "ml-0"} ${faded ? "border-[#dededb] opacity-60" : "border-[#cfcfca]"}`} />
      )}
      {box === "on" && (
        <span className="ml-[7px] flex size-[18px] items-center justify-center rounded-[3px] bg-[#4f98cb]">
          <svg width="8" height="9" viewBox="0 0 8 9" stroke="#e8f2f8"><path d="M.5,.5 L7.500,8.500 M7.500,.5 L.5,8.500" /></svg>
        </span>
      )}
      <span className={`text-xs font-bold tracking-[-0.080px] whitespace-nowrap ${box ? "ml-[6px]" : "ml-[13px]"} ${faded ? "text-[#a5a8a5]" : "text-[#222220]"}`}>{label}</span>
      {info && <span className="ml-auto"><InfoDot framed={info === "framed"} /></span>}
    </div>
  );
}

const legend: [string, string, string, string][] = [
  ["CROIX D'ARGENT", "#cfe6f3", "#6fa5cb", "#9fa19f"], ["HOPITAUX-FACULTES", "#a3c9de", "#2a62ae", "#4f98cb"],
  ["LES CEVENNES", "#d6e6c8", "#a0a29c", "#9fa19f"], ["MONTPELLIER CENTRE", "#ecd5d0", "#c0675f", "#9fa19f"],
  ["MOSSON", "#e2a297", "#b94a42", "#b94a42"], ["PORT MARIANNE", "#e9d4a0", "#cfac58", "#cfac58"],
  ["PRES D'ARENE", "#e3d9e6", "#9fa19f", "#9fa19f"], ["", "#93b6cc", "#6d7688", "#8d8a90"],
];

function LayerPanel() {
  return (
    <section className="relative flex w-[271px] shrink-0 flex-col bg-[#141414]/75 px-[5px] text-white">
      <h2 className="flex h-[41px] items-center border-b border-dashed border-white pt-[7px] pl-3 text-base font-bold tracking-[0.2px]">Couches</h2>
      <h3 className="flex h-[36px] items-center gap-[5px] border-b border-[#a0a0a0] pl-[9px] text-sm font-bold tracking-[0.3px]">
        <Layers fg="#fff" gap="#474747" />Légende
      </h3>
      <div className="flex h-[22px] items-center justify-end gap-[8px] pr-[3px] pb-[3px]">
        <svg width="13" height="13" viewBox="0 0 13 13"><circle cx="6.500" cy="6.500" r="6" fill="#b0b2ae" /><path d="M6.500,2.500 V4.500 M5,6 H6.800 V9.500 M4.500,9.800 H9" stroke="#474747" strokeWidth="1.600" fill="none" /></svg>
        <svg width="13" height="13" viewBox="0 0 13 13" fill="none" stroke="#b0b2ae"><circle cx="5.500" cy="5.500" r="4.300" strokeWidth="1.600" /><path d="M3.500,5.500 H7.500 M5.500,3.500 V7.500" /><path d="M8.800,8.800 L12.500,12.500" strokeWidth="2" /></svg>
        <span className="flex items-center gap-[3px]">
          <svg width="13" height="13" viewBox="0 0 13 13"><circle cx="6.500" cy="6.500" r="5.300" fill="none" stroke="#b0b2ae" strokeWidth="1.500" /><path d="M6.500,1 A5.500,5.500 0 0 1 6.500,12Z" fill="#c8bcae" /></svg>
          <svg className="mt-[4px]" width="8" height="4" viewBox="0 0 8 4"><path d="M0,0 H8 L4,4Z" fill="#1f1f1f" /></svg>
        </span>
        <span className="-ml-[5px] flex items-center gap-[3px]">
          <svg width="13" height="13" viewBox="0 0 13 13"><circle cx="6.500" cy="6.500" r="5.300" fill="none" stroke="#b0b2ae" strokeWidth="1.600" /><path d="M6.500,3 V8 M4.500,6.500 L6.500,9.300 L8.500,6.500" stroke="#d0b4a8" strokeWidth="1.400" fill="none" /></svg>
          <svg className="mt-[4px]" width="8" height="4" viewBox="0 0 8 4"><path d="M0,0 H8 L4,4Z" fill="#1f1f1f" /></svg>
        </span>
      </div>
      <div className="flex h-[570px] flex-col bg-[#efefef] pt-[6px]">
        {rows.map((r) => <TreeRow key={r.label} {...r} />)}
        <div className="flex h-[47px] items-center gap-[6px] pt-[2px] pl-[53px]">
          <svg width="28" height="17" viewBox="0 0 28 17"><rect x=".5" y=".5" width="27" height="15.500" fill="none" stroke="#333" strokeDasharray="5 3" /></svg>
          <span className="font-['DejaVu_Sans',sans-serif] text-xs text-[#222220]">SousQuartiers</span>
        </div>
        <div className="-mt-[7px]"><TreeRow label="Districts" caret="open" box="on" info="framed" pad="pl-[11px]" /></div>
        <div className="flex flex-col pt-[16px] pl-[52px]">
          {legend.map(([name, bg, top, side], i) => (
            <div key={i} className="flex h-[18.900px] items-center gap-[6px]">
              <svg width="29" height="17" viewBox="0 0 29 17" fill="none">
                <rect x="1" y="1" width="27" height="15" fill={bg} />
                <path d="M1,1.200 H28 M1,15.800 H28" stroke={top} strokeWidth="1.800" strokeDasharray="10 2" />
                <path d="M1.200,1 V16 M27.800,1 V16" stroke={side} strokeWidth="1.800" strokeDasharray="6 2" />
              </svg>
              <span className="font-['DejaVu_Sans',sans-serif] text-xs whitespace-nowrap text-[#222220]">{name}</span>
            </div>
          ))}
        </div>
      </div>
      <h3 className="flex h-[35px] items-center gap-[5px] pl-[10px] text-sm font-bold tracking-[0.3px]">
        <FaEarthAfrica size={19} color="#fff" className="shrink-0" />Fond de carte
      </h3>
      <div className="flex h-[35px] items-center bg-[#efefef] pr-[4px] pl-[6px]">
        <div className="flex h-[23px] w-[251px] border border-[#5a5a58] text-xs font-bold text-[#222220]">
          <span className="flex flex-1 items-center pl-[10px] tracking-[-0.080px]">MapQuest OSM</span>
          <SelectArrow />
        </div>
      </div>
      <div className="mt-auto ml-[191px] h-[34px] w-[69px] rounded-[4px] border border-[#bbb] bg-[#f8f8f8] pt-[7px] pl-[10px] text-sm leading-none text-[#333]">Fermer</div>
    </section>
  );
}

function SelectArrow() {
  return (
    <span className="flex w-[22px] items-center justify-center border-l border-[#5a5a58] bg-[#dcdcd8]">
      <svg width="8" height="7" viewBox="0 0 8 7"><path d="M0,.5 H8 L4,6.500Z" fill="#1d1d1b" /></svg>
    </span>
  );
}

/* ---------- header ---------- */

function wave(y: number, x0: number, x1: number, seed: number, amp: number) {
  let s = seed;
  let d = `M${x0},${y}`;
  let v = y;
  for (let x = x0; x < x1; x += 5) {
    s = (s * 1103515245 + 12345) % 2147483648;
    v += (s / 2147483648 - 0.5) * amp + (y - v) * 0.03;
    d += `L${x},${v.toFixed(1)}`;
  }
  return d;
}

function Header() {
  return (
    <header className="relative flex h-[76px] shrink-0 overflow-hidden border-t border-[#262624] bg-[#474747]">
      <svg className="absolute inset-0" width="1280" height="75" viewBox="0 0 1280 75" fill="none" stroke="#3f3f3f">
        <path d={wave(55, 220, 420, 3, 9)} strokeWidth="4" />
        <path d={wave(20, 340, 480, 8, 10)} strokeWidth="2.500" />
        <path d={wave(30, 780, 980, 12, 8)} strokeWidth="3" />
        <path d={wave(12, 940, 1080, 19, 7)} strokeWidth="2" />
        <path d={wave(60, 440, 640, 23, 8)} strokeWidth="2" />
        <path d={wave(22, 560, 800, 27, 9)} strokeWidth="1.500" />
        <path d={wave(18, 0, 120, 31, 5)} strokeDasharray="2 3" />
        <path d="M80,60 L180,20 L300,-5 M340,0 L372,75 M916,0 V75 M1190,0 L1175,75 M500,0 L640,75 M700,75 L760,0 M640,10 L1000,60 M0,40 L90,75" />
        {Array.from({ length: 26 }, (_, i) => (
          <path key={i} d={`M${130 + i * 43},${60 - (i % 4) * 6} l22,-34 m4,6 l-16,26`} strokeDasharray="3 2" strokeWidth="2" opacity=".6" />
        ))}
      </svg>
      <svg className="relative mt-[5px] ml-[20px] shrink-0" width="60" height="60" viewBox="0 0 60 60" fontFamily="'DejaVu Sans', sans-serif" fontWeight="bold">
        <circle cx="30" cy="30" r="30" fill="#cfaa55" />
        <text x="7" y="34.500" fontSize="30" fill="#fff" stroke="#fff" strokeWidth=".8" textLength="45" lengthAdjust="spacingAndGlyphs">Liz</text>
        <path d="M8,31 C22,35 32,33 53,21 M30,33 L50,25" stroke="#cfaa55" strokeWidth="1.200" fill="none" />
        <text x="11" y="46" fontFamily="Lato, 'DejaVu Sans', sans-serif" fontWeight="900" fontSize="19" fill="#222220" textLength="37" lengthAdjust="spacingAndGlyphs">map</text>
      </svg>
      <h1 className="relative mt-[6px] ml-[20px] w-[307px] text-[26px] leading-[34px] font-bold tracking-[-0.110px] whitespace-nowrap text-[#f0f0f0]">Montpellier - Transports</h1>
      <span className="relative mt-[18px] text-[13px] leading-5 font-bold text-[#dcdcdc]">montpellier</span>
      <div className="relative mt-[47px] ml-auto flex h-[26px] w-[236px] items-center justify-between rounded-full border border-[#c4c4c4] bg-white pr-px pl-[14px] text-[13px] text-[#9c9c9c]">
        <span className="pt-[2px] tracking-[0.100px]">Rue, Ville</span>
        <svg width="24" height="24" viewBox="0 0 24 24" fill="none" stroke="#222220"><circle cx="11" cy="10.500" r="7.800" strokeWidth="2.600" /><path d="M16.500,16 L21,20.500" strokeWidth="4" /></svg>
      </div>
      <div className="relative mt-[50px] mr-[20px] ml-[9px] flex h-5 items-center gap-[5px] text-[13px] font-bold text-[#6a6a6a]">
        <svg width="20" height="20" viewBox="0 0 20 20" fill="none" stroke="#3c3c3a"><circle cx="10" cy="10" r="9.500" fill="#fff" stroke="none" /><path d="M6.800,5 A6,6 0 1 0 13.200,5" strokeWidth="1.900" /><path d="M10,3.500 V10" strokeWidth="2" /></svg>
        <span>Connexion</span>
      </div>
    </header>
  );
}

/* ---------- right side widgets ---------- */

function LocateField({ label, select }: { label: string; select?: boolean }) {
  return (
    <div className="flex h-[24px] border border-[#5a5a58] text-xs font-bold text-[#a0a3a0]">
      <span className="flex flex-1 items-center pl-[6px]">{label}</span>
      {select && <SelectArrow />}
    </div>
  );
}

function LocatePanel() {
  return (
    <section className="absolute top-[10px] left-[720px] w-[197px] bg-[#efefef]">
      <h3 className="flex h-[35px] items-center bg-[#404040] pl-[10px] text-sm font-bold text-white">
        <Signpost fg="#fff" />
        <span className="ml-[8px] tracking-[0.200px]">Géolocalisation</span>
        <svg className="ml-[4px]" width="22" height="22" viewBox="0 0 22 22" fill="#fff">
          <path d="M1,2.500 L3.500,.5 L8,4.500 L10.500,2.500 L13,7.500 L9,13.500 L4.500,10 L6,7.500Z" />
          <path d="M6,12 L8,14.500 M11.500,5.500 L13,7" stroke="#fff" />
          <circle cx="15.500" cy="14.800" r="4.500" fill="none" stroke="#fff" strokeWidth="1.600" />
          <path d="M9,12 L15,18.500 L17,12 L11,8Z" stroke="#fff" strokeWidth=".6" />
        </svg>
        <svg className="mt-[4px] ml-[6px]" width="9" height="9" viewBox="0 0 9 9" stroke="#b94a42" strokeWidth="2.400"><path d="M1,1 L8,8 M8,1 L1,8" /></svg>
      </h3>
      <div className="flex h-[126px] flex-col gap-[19.500px] pt-[8px] pr-[6px] pl-[8px]">
        <LocateField label="Name Districts" />
        <LocateField label="Name Sous-Quartiers" select />
        <LocateField label="Line Tram lines" select />
      </div>
    </section>
  );
}

function ToolBox({ children, dark }: { children: React.ReactNode; dark?: boolean }) {
  return <div className={`flex size-[30px] items-center justify-center border border-[#f4f1ec] ${dark ? "bg-[#1e1e1c]" : "bg-[#b94a42]"}`}>{children}</div>;
}

function Tools() {
  return (
    <div className="absolute top-[14px] left-[936px] flex w-8 flex-col items-center">
      <ToolBox dark>
        <svg width="20" height="22" viewBox="0 0 20 22" fill="none" stroke="#efefef" strokeWidth="2.300" strokeLinecap="round">
          <path d="M6,11 V4.500 M9.200,10 V2.500 M12.400,10 V3 M15.500,11 V5.500 M3,11.500 L6,15.500" />
          <path d="M5.500,11 H16 C16,15 15.500,17 14.500,19.500 H8 C6,18 5,16 3,12" strokeWidth="1.700" />
          <path d="M8,15 C9.500,12.500 12,12.500 13,14.500" strokeWidth="1.200" />
        </svg>
      </ToolBox>
      <div className="mt-[2px]"><ToolBox><svg width="20" height="20" viewBox="0 0 20 20" fill="none" stroke="#f5e8e2"><rect x="1" y="1" width="18" height="18" strokeWidth="1.200" /><path d="M11,14 H16.500 M13.800,11.300 V16.800" strokeWidth="1.200" /></svg></ToolBox></div>
      <div className="mt-px"><ToolBox><svg width="20" height="20" viewBox="0 0 20 20" fill="none" stroke="#f5e8e2" strokeWidth="1.500"><circle cx="10" cy="10" r="7" /><path d="M10,0 V7.500 M10,12.500 V20 M0,10 H7.500 M12.500,10 H20" /></svg></ToolBox></div>
      <div className="mt-[2px]"><ToolBox><svg width="20" height="20" viewBox="0 0 20 20" stroke="#f5e8e2" strokeWidth="1.600"><path d="M10,0 V20 M0,10 H20" /></svg></ToolBox></div>
      <div className="mt-[3px] h-[49px] w-[6px] border-x border-[#f4f1ec] bg-[#b94a42]" />
      <div className="h-[3px] w-8 bg-[#222220]" />
      <div className="mt-px"><ToolBox><svg width="20" height="20" viewBox="0 0 20 20" stroke="#f5e8e2" strokeWidth="1.600"><path d="M0,10 H20" /></svg></ToolBox></div>
      <div className="mt-[2px] flex w-[30px] self-start pl-px">
        <span className="flex h-[30px] w-[14px] items-center justify-center border border-[#f4f1ec] bg-[#b94a42]"><svg width="12" height="18" viewBox="0 0 12 18" fill="none" stroke="#f5e8e2" strokeWidth="1.400"><path d="M9,2 L2,9 L9,16 M2,9 H12" /></svg></span>
        <span className="ml-px flex h-[30px] w-[14px] items-center justify-center border border-[#f4f1ec] bg-[#b94a42]"><svg width="12" height="18" viewBox="0 0 12 18" fill="none" stroke="#f5e8e2" strokeWidth="1.600" strokeDasharray="1.600 2"><path d="M3,2 L10,9 L3,16 M0,9 H10" /></svg></span>
      </div>
    </div>
  );
}

/* ---------- data panel ---------- */

const datasets: [string, string][] = [
  ["Sous-Quartiers", "bg-[#f9f9f9]"], ["Tram stop works", "bg-[#f5f5f5]"], ["Tram stops", "bg-[#f9f9f9]"], ["Districts", "bg-[#efefef]"],
  ["Tram lines", "bg-[#f9f9f9]"], ["tramway_ref", "bg-[#efefef]"], ["Points of interest", "bg-[#f9f9f9]"], ["public buildings", "bg-[#efefef]"],
];

function DataPanel() {
  return (
    <section className="absolute top-[431px] left-0 flex h-[453px] w-[968px] flex-col border-t border-r border-dotted border-black bg-[#141414]/75 pr-[5px] pl-[5px]">
      <h2 className="flex h-[41px] shrink-0 items-center border-b border-dashed border-white pt-[7px] pl-3 text-base font-bold tracking-[0.200px] text-white">Données</h2>
      <div className="mt-[9px] ml-[5px] flex h-[372px] w-[947px] shrink-0 border border-[#707070] bg-[#efefef] text-[13px] text-[#2b2b29]">
        <div className="flex-1 overflow-hidden pt-[7px] pl-[6px]">
          <p className="leading-5 font-bold">Aide</p>
          <p className="leading-5 tracking-[-0.123px] whitespace-nowrap">Choisissez une des données suivantes et cliquez sur le bouton "Données" pour afficher les données.</p>
          <div className="mt-[9px] flex w-[177px] flex-col">
            {datasets.map(([name, bg], i) => (
              <div key={name} className={`flex h-[39px] shrink-0 justify-between border-t border-[#dddddd] pr-[5px] pl-[5px] ${bg}`}>
                <span className="pt-[5px] leading-5 tracking-[-0.080px]">{name}</span>
                {i === 1 ? (
                  <span className="mt-[4px] flex h-[30px] w-[60px] flex-col items-center bg-[#2a62ae] pt-[2px] text-sm text-[#e9eef6]">
                    <span className="h-[3px] w-[58px] self-start bg-[#4f98cb]" />
                    <span className="leading-[23px]">Detail</span>
                  </span>
                ) : (
                  <span className="mt-[5px] mr-px flex h-[29px] w-[59px] items-center justify-center rounded-[5px] border border-[#a2a2a0] bg-linear-to-b from-white to-[#ebebe9] pt-[3px] text-sm text-[#444a50]">Detail</span>
                )}
              </div>
            ))}
          </div>
        </div>
        <div className="w-[10px] bg-[#e3e3e1]"><div className="h-[262px] bg-[#cfac58]" /></div>
      </div>
      <div className="-mr-[5px] flex flex-1 items-center justify-end text-[#1b1b1b]">
        <div className="mr-auto flex gap-[8px] self-start pt-[6px] pl-[2px]">
          <span className="h-6 w-[50px] rounded-t bg-[#f4f4f4]" /><span className="h-6 w-[56px] rounded-t bg-[#f4f4f4]" /><span className="h-6 w-[56px] rounded-t bg-[#f4f4f4]" />
        </div>
        <div className="flex h-full items-center rounded-tl-lg bg-[#484a4a] pl-2 text-xs">
          <span className="pt-px tracking-[0.080px]">© <span className="text-[#2c3454]">OpenStreetMap</span> contributors</span>
          <span className="mt-[8px] ml-[9px] text-[7.500px] font-bold">Powered by</span>
          <svg className="ml-[6px]" width="62" height="30" viewBox="0 0 62 30" fontFamily="'DejaVu Sans', sans-serif">
            <path d="M10,0 C-2,8 0,26 14,29 C6,18 8,8 16,6 C14,3 12,2 10,0Z M14,6 l4,-2 l2,3 l-3,3Z" fill="#1c1c1a" />
            <text x="15" y="29" fontSize="21" fontWeight="bold" fill="#1c1c1a" textLength="46" lengthAdjust="spacingAndGlyphs">3Liz</text>
          </svg>
        </div>
      </div>
    </section>
  );
}

export default function App() {
  return (
    <div className="relative flex h-[960px] w-[1280px] flex-col overflow-hidden bg-[#f7f4ee] font-['Liberation_Sans',Arial,sans-serif]">
      <MapDrawing />
      <Header />
      <main className="relative flex min-h-0 flex-1">
        <nav className="flex w-[31px] shrink-0 flex-col border-r border-white bg-[#474747]">
          {navIcons.map((icon, i) => (
            <span key={i} className={`flex size-[30px] items-center justify-center ${activeNav.includes(i) ? "bg-[#efefef]" : ""}`}>{icon}</span>
          ))}
        </nav>
        <LayerPanel />
        <div className="mt-[431px] w-px shrink-0 bg-white" />
        <div className="relative flex-1">
          <LocatePanel />
          <Tools />
          <DataPanel />
        </div>
      </main>
      <div className="absolute bottom-0 left-0 flex h-[22px] w-[625px] items-center overflow-hidden rounded-tr-[4px] border-t border-r border-[#c8c8c4] bg-linear-to-b from-[#f6f6f5] to-[#e8e8e6] pl-1 font-['Noto_Sans',sans-serif] text-[15px] leading-5 tracking-[-0.180px] whitespace-nowrap text-[#3a3a38]">
        lizmap.localhost/index.php/view/map/?reposi…ject=montpellier#attribute-layer-Quartiers
      </div>
    </div>
  );
}
